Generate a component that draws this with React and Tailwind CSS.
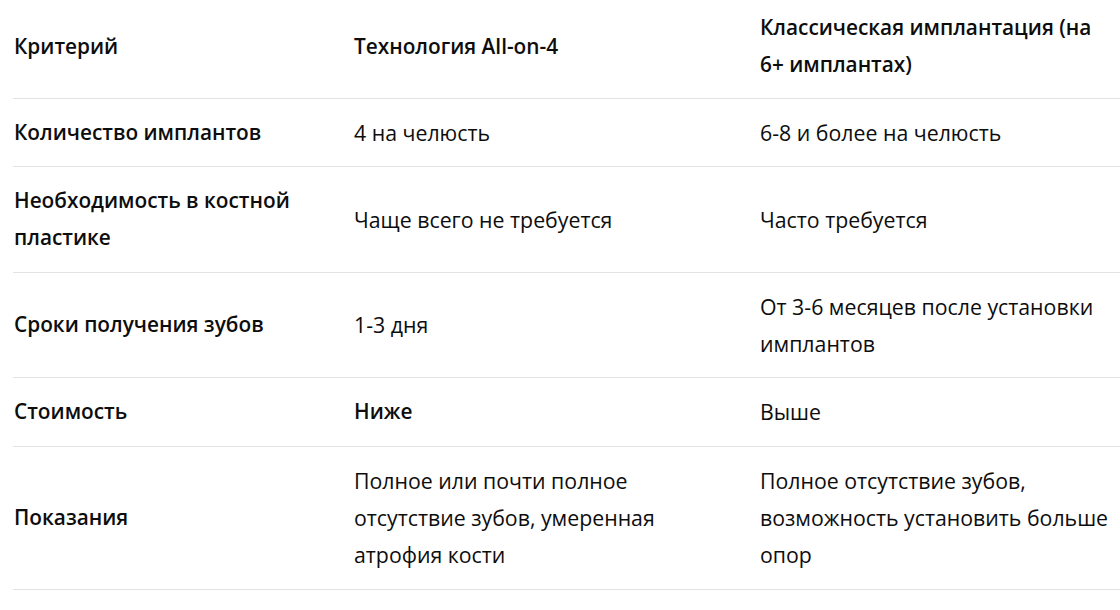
import React from "react";

const rows = [
  {
    c1: "Количество имплантов",
    c2: ["4 на челюсть"],
    c3: ["6-8 и более на челюсть"],
  },
  {
    c1: ["Необходимость в костной", "пластике"],
    c2: ["Чаще всего не требуется"],
    c3: ["Часто требуется"],
  },
  {
    c1: "Сроки получения зубов",
    c2: ["1-3 дня"],
    c3: ["От 3-6 месяцев после установки", "имплантов"],
  },
  {
    c1: "Стоимость",
    c2: ["Ниже"],
    c2bold: true,
    c3: ["Выше"],
  },
  {
    c1: "Показания",
    c2: ["Полное или почти полное", "отсутствие зубов, умеренная", "атрофия кости"],
    c3: ["Полное отсутствие зубов,", "возможность установить больше", "опор"],
  },
];

function Lines({ lines }) {
  const arr = Array.isArray(lines) ? lines : [lines];
  return arr.map((l, i) => (
    <React.Fragment key={i}>
      {l}
      {i < arr.length - 1 && <br />}
    </React.Fragment>
  ));
}

const bold = "py-[15px] pl-[1px] align-middle font-semibold text-[20.8px] whitespace-nowrap";
const reg = "py-[15px] pl-[1px] align-middle font-normal text-[21.3px] whitespace-nowrap";
const head = "pt-[9px] pb-[14px] pl-[1px] text-left align-middle font-semibold text-[20.8px] whitespace-nowrap";

export default function App() {
  return (
    <div
      className="w-[1120px] h-[610px] overflow-hidden bg-white text-[#0d0d0d]"
      style={{ fontFamily: '"Open Sans", "Noto Sans", sans-serif' }}
    >
      <table className="ml-[13px] w-[1120px] border-collapse leading-[37.33px] table-fixed">
        <colgroup>
          <col className="w-[340px]" />
          <col className="w-[406px]" />
          <col />
        </colgroup>
        <thead>
          <tr className="border-b border-[#e3e3e3]">
            <th className={head}>Критерий</th>
            <th className={head}>Технология All-on-4</th>
            <th className={head}>
              Классическая имплантация (на
              <br />
              6+ имплантах)
            </th>
          </tr>
        </thead>
        <tbody>
          {rows.map((r, i) => (
            <tr key={i} className="border-b border-[#e3e3e3]">
              <td className={bold}>
                <Lines lines={r.c1} />
              </td>
              <td className={r.c2bold ? bold : reg}>
                <Lines lines={r.c2} />
              </td>
              <td className={reg}>
                <Lines lines={r.c3} />
              </td>
            </tr>
          ))}
        </tbody>
      </table>
    </div>
  );
}
